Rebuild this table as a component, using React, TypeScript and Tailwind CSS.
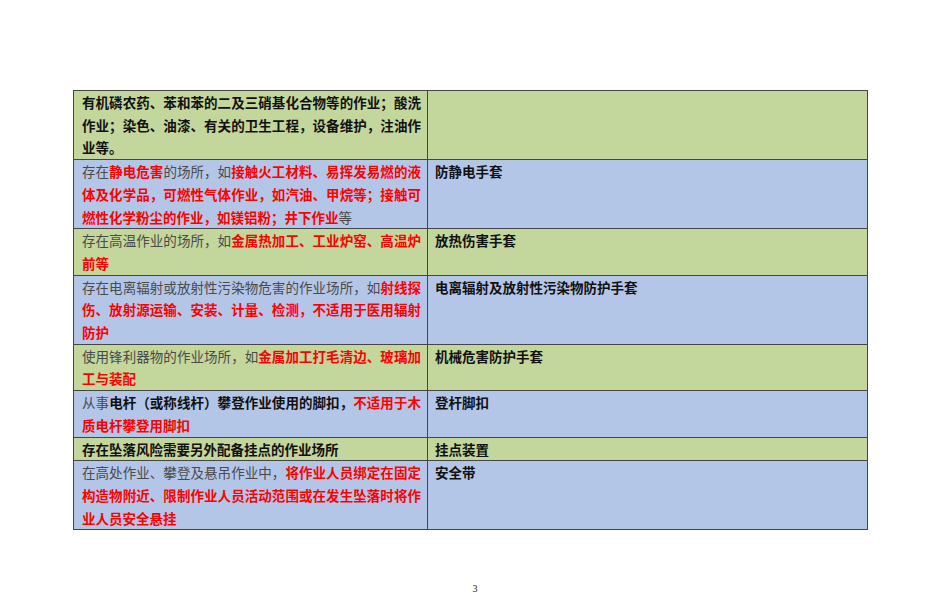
import React from "react";

type Seg = [string, "g" | "r" | "b"];
type Line = Seg[];

const cls = {
  g: "text-[#4a4a4a] font-normal",
  r: "text-[#ff0000] font-bold",
  b: "text-[#111111] font-bold",
};

const rows: { bg: string; left: Line[]; right: string }[] = [
  {
    bg: "bg-[#c3d69b]",
    left: [
      [["有机磷农药、苯和苯的二及三硝基化合物等的作业；酸洗", "b"]],
      [["作业；染色、油漆、有关的卫生工程，设备维护，注油作", "b"]],
      [["业等。", "b"]],
    ],
    right: "",
  },
  {
    bg: "bg-[#b4c6e7]",
    left: [
      [["存在", "g"], ["静电危害", "r"], ["的场所，如", "g"], ["接触火工材料、易挥发易燃的液", "r"]],
      [["体及化学品，可燃性气体作业，如汽油、甲烷等；接触可", "r"]],
      [["燃性化学粉尘的作业，如镁铝粉；井下作业", "r"], ["等", "g"]],
    ],
    right: "防静电手套",
  },
  {
    bg: "bg-[#c3d69b]",
    left: [
      [["存在高温作业的场所，如", "g"], ["金属热加工、工业炉窑、高温炉", "r"]],
      [["前等", "r"]],
    ],
    right: "放热伤害手套",
  },
  {
    bg: "bg-[#b4c6e7]",
    left: [
      [["存在电离辐射或放射性污染物危害的作业场所，如", "g"], ["射线探", "r"]],
      [["伤、放射源运输、安装、计量、检测，不适用于医用辐射", "r"]],
      [["防护", "r"]],
    ],
    right: "电离辐射及放射性污染物防护手套",
  },
  {
    bg: "bg-[#c3d69b]",
    left: [
      [["使用锋利器物的作业场所，如", "g"], ["金属加工打毛清边、玻璃加", "r"]],
      [["工与装配", "r"]],
    ],
    right: "机械危害防护手套",
  },
  {
    bg: "bg-[#b4c6e7]",
    left: [
      [["从事", "g"], ["电杆（或称线杆）攀登作业使用的脚扣，", "b"], ["不适用于木", "r"]],
      [["质电杆攀登用脚扣", "r"]],
    ],
    right: "登杆脚扣",
  },
  {
    bg: "bg-[#c3d69b]",
    left: [[["存在坠落风险需要另外配备挂点的作业场所", "b"]]],
    right: "挂点装置",
  },
  {
    bg: "bg-[#b4c6e7]",
    left: [
      [["在高处作业、攀登及悬吊作业中，", "g"], ["将作业人员绑定在固定", "r"]],
      [["构造物附近、限制作业人员活动范围或在发生坠落时将作", "r"]],
      [["业人员安全悬挂", "r"]],
    ],
    right: "安全带",
  },
];

export default function App() {
  return (
    <div
      className="w-[950px] h-[608px] bg-white overflow-hidden"
      style={{ fontFamily: '"Noto Sans CJK SC", "Noto Sans", sans-serif' }}
    >
      <div className="pt-[90px] pl-[73px]">
        <div className="w-[795px] border-t border-l border-[#454545]">
          {rows.map((row, i) => (
            <div key={i} className={`flex ${row.bg}`}>
              <div className="w-[354px] shrink-0 border-r border-b border-[#454545] pl-[8px] pr-[6px] text-[13.5px] leading-[22.7px]">
                {row.left.map((line, j) => {
                  const last = j === row.left.length - 1;
                  return (
                    <div
                      key={j}
                      className={
                        last
                          ? "whitespace-nowrap"
                          : "whitespace-nowrap text-justify [text-align-last:justify]"
                      }
                    >
                      {line.map((seg, k) => (
                        <span key={k} className={cls[seg[1]]}>
                          {seg[0]}
                        </span>
                      ))}
                    </div>
                  );
                })}
              </div>
              <div className="flex-1 border-r border-b border-[#454545] pl-[7px] text-[13.5px] leading-[22.7px] font-bold text-[#111111]">
                {row.right}
              </div>
            </div>
          ))}
        </div>
      </div>
      <div
        className="mt-[53px] w-full text-center text-[10px] leading-[12px] text-[#222]"
        style={{ fontFamily: '"Liberation Serif", serif' }}
      >
        3
      </div>
    </div>
  );
}
